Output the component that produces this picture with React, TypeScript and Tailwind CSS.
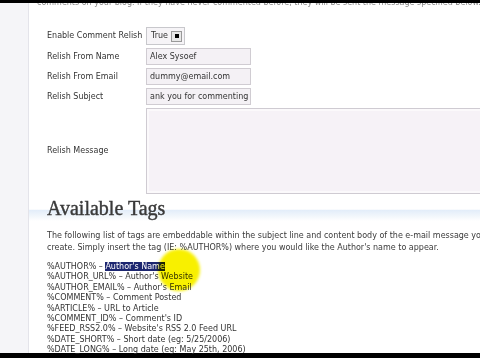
const fields = [
  { label: "Relish From Name", value: "Alex Sysoef" },
  { label: "Relish From Email", value: "dummy@email.com" },
  { label: "Relish Subject", value: "ank you for commenting" },
];

const tags = [
  { tag: "%AUTHOR_URL%", desc: "Author's Website" },
  { tag: "%AUTHOR_EMAIL%", desc: "Author's Email" },
  { tag: "%COMMENT%", desc: "Comment Posted" },
  { tag: "%ARTICLE%", desc: "URL to Article" },
  { tag: "%COMMENT_ID%", desc: "Comment's ID" },
  { tag: "%FEED_RSS2.0%", desc: "Website's RSS 2.0 Feed URL" },
  { tag: "%DATE_SHORT%", desc: "Short date (eg: 5/25/2006)" },
  { tag: "%DATE_LONG%", desc: "Long date (eg: May 25th, 2006)" },
];

export default function App() {
  return (
    <div className="w-[480px] h-[358px] overflow-hidden bg-white flex flex-col font-['DejaVu_Sans',sans-serif] text-[#333]">
      <div className="h-[3px] bg-black shrink-0" />

      <div className="flex flex-1 min-h-0">
        <aside className="w-[29px] shrink-0 bg-[#f5f5f8] border-r border-[#e4e4ea]" />

        <main className="relative flex-1 min-w-0 pl-[18px]">
          {/* intro line, cut off by the top of the frame */}
          <div className="h-[5px] overflow-hidden -ml-[10px]">
            <p className="-mt-[6px] whitespace-nowrap text-[8px] text-[#888]">
              comments on your blog. If they have never commented before, they will be sent the message specified below.
            </p>
          </div>

          {/* settings form */}
          <div className="mt-[19px] grid grid-cols-[99px_1fr] gap-y-[3px] text-[8px] items-center">
            <span>Enable Comment Relish</span>
            <div className="flex h-[18px] w-[39px] items-center justify-between border border-[#c8c8cc] bg-[#f6f4f7] pl-[4px] pr-[2px]">
              <span>True</span>
              <span className="flex h-[11px] w-[11px] items-center justify-center border border-[#999] bg-[#e8e8e8]">
                <span className="h-[4px] w-[4px] bg-black" />
              </span>
            </div>

            {fields.map((f) => (
              <div key={f.label} className="contents">
                <span>{f.label}</span>
                <div className="flex h-[17px] w-[105px] items-center overflow-hidden whitespace-nowrap border border-[#d0ccd2] bg-[#f4f1f5] px-[3px]">
                  {f.value}
                </div>
              </div>
            ))}

            <span>Relish Message</span>
            <div className="h-[86px] w-[340px] border border-[#cfcbd2] bg-[#f6f2f7] shadow-[inset_0_0_0_2px_#fbf9fb]" />
          </div>

          {/* available tags */}
          <h2 className="-ml-[18px] pl-[18px] mt-[1px] h-[26px] font-['Liberation_Serif',serif] text-[20px] leading-[26px] text-[#3a3a3a] [-webkit-text-stroke:0.4px_#3a3a3a] bg-[linear-gradient(to_bottom,transparent_55%,#e2edf9_58%,#f4f8fc_85%,#fff_100%)]">
            Available Tags
          </h2>

          <div className="mt-[9px] text-[8px] leading-[12px] whitespace-nowrap text-[#3a3a3a]">
            <p>The following list of tags are embeddable within the subject line and content body of the e-mail message you</p>
            <p>create. Simply insert the tag (IE: %AUTHOR%) where you would like the Author's name to appear.</p>
          </div>

          <ul className="mt-[8px] text-[8px] leading-[10.4px] whitespace-nowrap text-[#333]">
            <li>
              %AUTHOR% – <span className="bg-[#1c2670] text-white">Author's Name</span>
            </li>
            {tags.map((t) => (
              <li key={t.tag}>
                {t.tag} – {t.desc}
              </li>
            ))}
          </ul>

          {/* cursor highlight */}
          <div className="absolute left-[129px] top-[246px] h-[42px] w-[42px] rounded-full bg-[#f8f000] mix-blend-multiply blur-[1.5px]" />
        </main>
      </div>

      <div className="h-[5px] bg-black shrink-0" />
    </div>
  );
}
